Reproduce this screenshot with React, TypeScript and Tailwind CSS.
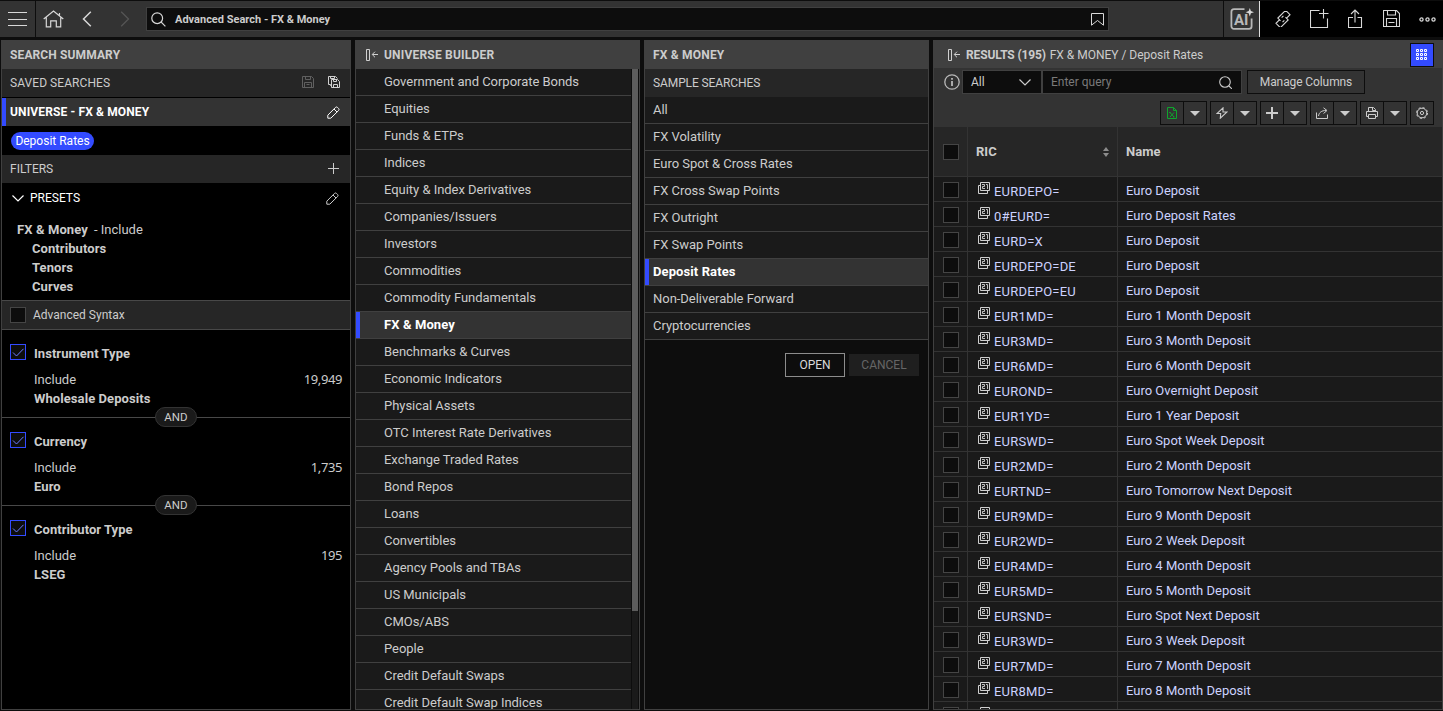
import type { ReactNode } from 'react';

const universes = [
  'Government and Corporate Bonds',
  'Equities',
  'Funds & ETPs',
  'Indices',
  'Equity & Index Derivatives',
  'Companies/Issuers',
  'Investors',
  'Commodities',
  'Commodity Fundamentals',
  'FX & Money',
  'Benchmarks & Curves',
  'Economic Indicators',
  'Physical Assets',
  'OTC Interest Rate Derivatives',
  'Exchange Traded Rates',
  'Bond Repos',
  'Loans',
  'Convertibles',
  'Agency Pools and TBAs',
  'US Municipals',
  'CMOs/ABS',
  'People',
  'Credit Default Swaps',
  'Credit Default Swap Indices',
];

const samples = [
  'All',
  'FX Volatility',
  'Euro Spot & Cross Rates',
  'FX Cross Swap Points',
  'FX Outright',
  'FX Swap Points',
  'Deposit Rates',
  'Non-Deliverable Forward',
  'Cryptocurrencies',
];

const filters = [
  { title: 'Instrument Type', value: 'Wholesale Deposits', count: '19,949' },
  { title: 'Currency', value: 'Euro', count: '1,735' },
  { title: 'Contributor Type', value: 'LSEG', count: '195' },
];

const results = [
  ['EURDEPO=', 'Euro Deposit'],
  ['0#EURD=', 'Euro Deposit Rates'],
  ['EURD=X', 'Euro Deposit'],
  ['EURDEPO=DE', 'Euro Deposit'],
  ['EURDEPO=EU', 'Euro Deposit'],
  ['EUR1MD=', 'Euro 1 Month Deposit'],
  ['EUR3MD=', 'Euro 3 Month Deposit'],
  ['EUR6MD=', 'Euro 6 Month Deposit'],
  ['EUROND=', 'Euro Overnight Deposit'],
  ['EUR1YD=', 'Euro 1 Year Deposit'],
  ['EURSWD=', 'Euro Spot Week Deposit'],
  ['EUR2MD=', 'Euro 2 Month Deposit'],
  ['EURTND=', 'Euro Tomorrow Next Deposit'],
  ['EUR9MD=', 'Euro 9 Month Deposit'],
  ['EUR2WD=', 'Euro 2 Week Deposit'],
  ['EUR4MD=', 'Euro 4 Month Deposit'],
  ['EUR5MD=', 'Euro 5 Month Deposit'],
  ['EURSND=', 'Euro Spot Next Deposit'],
  ['EUR3WD=', 'Euro 3 Week Deposit'],
  ['EUR7MD=', 'Euro 7 Month Deposit'],
  ['EUR8MD=', 'Euro 8 Month Deposit'],
  ['', ''],
];

type IconProps = { w: number; h: number; className?: string; sw?: number; children: ReactNode };

function Icon({ w, h, className = '', sw = 1, children }: IconProps) {
  return (
    <svg
      width={w}
      height={h}
      viewBox={`0 0 ${w} ${h}`}
      fill="none"
      stroke="currentColor"
      strokeWidth={sw}
      className={`block shrink-0 ${className}`}
    >
      {children}
    </svg>
  );
}

function Pencil({ className = '' }: { className?: string }) {
  return (
    <Icon w={13} h={13} className={className}>
      <path d="M.8 12.200v-3L8.400 1.500c.7-.7 1.500-.7 2.100-.1l1.100 1.100c.6.6.6 1.400-.1 2.100L3.800 12.200z" />
      <path d="M7 3l3 3" />
    </Icon>
  );
}

function Floppy({ className = '' }: { className?: string }) {
  return (
    <Icon w={12} h={12} className={className}>
      <path d="M.5.5h9l2 2v9H.5zM3.500.5v3h5v-3M2.500 11.500v-5h7v5M4.500 8.500h3" />
    </Icon>
  );
}

function Collapse() {
  return (
    <Icon w={13} h={12} className="text-[#d0d0d0]">
      <path d="M.5.5h3v11h-3zM12 5.500H6.500M9 2.700L6.200 5.500 9 8.300" />
    </Icon>
  );
}

function Checkbox({ checked }: { checked?: boolean }) {
  if (!checked) return <span className="block size-4 shrink-0 border border-[#454545] bg-[#0d0d0d]" />;
  return (
    <span className="flex size-4 shrink-0 items-center justify-center border border-[#334bff] bg-[#0d0d0d]">
      <Icon w={14} h={14} className="text-[#6b7bff]">
        <path d="M2 7.500l3.500 3.500L12.500 3.800" />
      </Icon>
    </span>
  );
}

function NavBar() {
  return (
    <header className="flex h-[37px] shrink-0 border-t border-[#0d0d0d] bg-[#333] text-[#d8d8d8]">
      <div className="flex w-9 items-center border-r border-[#0d0d0d] pl-2">
        <Icon w={19} h={16}>
          <path d="M0 1.500h19M0 8.500h19M0 14.500h19" />
        </Icon>
      </div>
      <div className="flex w-[110px] items-center pl-[7px]">
        <Icon w={21} h={18} sw={1.2}>
          <path d="M.7 9L10.500 1l9.800 8M3.300 7.500v9.400h4.400v-6h5.600v6h4.400V7.500M16.500 3v3" />
        </Icon>
        <Icon w={10} h={16} className="ml-[18px]" sw={1.5}>
          <path d="M8.800.8L1.500 8l7.300 7.200" />
        </Icon>
        <Icon w={10} h={16} className="ml-7 text-[#555]" sw={1.3}>
          <path d="M1.200.8L8.500 8l-7.300 7.200" />
        </Icon>
      </div>
      <div className="mt-1.5 flex h-6 w-[963px] items-center border border-[#404040] bg-[#0d0d0d] pr-1 pl-1">
        <Icon w={15} h={15} sw={1.2}>
          <circle cx="6.200" cy="6.200" r="5.400" />
          <path d="M10.200 10.200l4.200 4.200" />
        </Icon>
        <span className="ml-[9px] flex-1 pt-0.5 text-[11px] font-bold text-[#ccc]">Advanced Search - FX &amp; Money</span>
        <Icon w={13} h={13}>
          <path d="M.5.5h12v11.700L6.500 7.500l-6 4.700z" />
        </Icon>
      </div>
      <div className="ml-auto flex w-[37px] items-center justify-center border-r border-l border-r-[#ddd] border-l-[#0d0d0d]">
        <svg width="24" height="22" viewBox="0 0 24 22" fill="none" stroke="#b8b8b8" strokeWidth="1.8" className="block">
          <path d="M14.500 1.200H4A2.600 2.600 0 0 0 1.400 3.800v14.400A2.600 2.600 0 0 0 4 20.800h15a2.600 2.600 0 0 0 2.600-2.600V10.500" />
          <text x="4" y="16.500" fill="#b8b8b8" stroke="none" fontSize="15" fontWeight="700" fontFamily="Roboto, sans-serif">AI</text>
          <path d="M19.800 0l1.100 3.100L24 4.200l-3.100 1.100-1.100 3.100-1.100-3.100-3.100-1.100 3.100-1.100z" fill="#d8d8d8" stroke="none" />
        </svg>
      </div>
      <div className="flex w-[183px] items-center bg-black pl-[15px]">
        <Icon w={16} h={16} sw={1.1}>
          <path d="M5 7.500V3.700h11v6.200h-5.500M11 8.500v3.800H0V6.100h5.500M5.500 9.900h2.500M8 6.100h2.500" transform="rotate(-45 8 8)" />
        </Icon>
        <Icon w={19} h={19} className="-mt-px ml-[19px]" sw={1.1}>
          <path d="M9.500 1.500h-9v17h17V9.500M13.500 0v9.500M9 4.500h9.500" />
        </Icon>
        <Icon w={15} h={19} className="-mt-px ml-[19px]" sw={1.1}>
          <path d="M5 8.500H.5v10h13v-10H9.500M7 13.500V1M3 5l4-4 4 4" />
        </Icon>
        <Icon w={17} h={17} className="-mt-px ml-5" sw={1.1}>
          <path d="M.5.5h13l3 3v13H.5zM4.500.5v4.500h8V.5M3.500 16.500v-8h10v8M5.500 12.500h6" />
        </Icon>
        <Icon w={17} h={5} className="ml-[19px]" sw={1.3}>
          <circle cx="2.500" cy="2.500" r="1.600" />
          <circle cx="8.500" cy="2.500" r="1.600" />
          <circle cx="14.500" cy="2.500" r="1.600" />
        </Icon>
      </div>
    </header>
  );
}

function Summary() {
  return (
    <section className="flex w-[350px] flex-col border border-t-0 border-[#404040] bg-black text-[13px] text-[#ccc]">
      <h2 className="-mx-px flex h-[29px] items-center bg-[#404040] pt-px pl-[9px] text-xs font-bold tracking-[0.12px]">SEARCH SUMMARY</h2>
      <div className="flex h-[29px] items-center border-b border-black bg-[#262626] pr-2.5 pl-2 text-xs">
        <span className="flex-1 tracking-[0.06px]">SAVED SEARCHES</span>
        <Floppy className="-mt-0.5 text-[#606060]" />
        <Icon w={12} h={12} className="-mt-0.5 ml-[14px] text-[#d0d0d0]">
          <path d="M3.500 9.500h-1v-1h-2v-8h7l2 2M2.500.5v2h4v-2M3.500 3.500h6l2 2v6h-8zM5.500 3.500v2h3v-2M5.500 11.500v-3h4v3" />
        </Icon>
      </div>
      <div className="flex h-7 items-center border-l-4 border-[#334bff] bg-[#333] pr-2.5 pl-1 text-xs font-bold text-white">
        <span className="flex-1 tracking-[0.13px]">UNIVERSE - FX &amp; MONEY</span>
        <Pencil />
      </div>
      <div className="flex h-[29px] items-center pl-[9px]">
        <span className="flex h-[18px] w-[83px] items-center justify-center rounded-full bg-[#334bff] text-xs text-white">Deposit Rates</span>
      </div>
      <div className="flex h-7 items-center bg-[#262626] pr-[11px] pl-2 text-xs">
        <span className="flex-1">FILTERS</span>
        <Icon w={11} h={11} className="-mt-px">
          <path d="M5.500 0v11M0 5.500h11" />
        </Icon>
      </div>
      <div className="flex h-[30px] items-center pr-[11px] pl-2.5 text-xs text-white">
        <Icon w={12} h={7} sw={1.2}>
          <path d="M.5.5L6 6 11.500.5" />
        </Icon>
        <span className="ml-1.5 flex-1">PRESETS</span>
        <Pencil className="text-[#ccc]" />
      </div>
      <div className="h-[87px] pt-[7px] pl-[15px] leading-[19px]">
        <p>
          <b className="tracking-[0.1px]">FX &amp; Money</b>
          <span className="ml-1.5">- Include</span>
        </p>
        <div className="pl-[15px] font-bold tracking-[0.08px]">
          <p>Contributors</p>
          <p>Tenors</p>
          <p>Curves</p>
        </div>
      </div>
      <div className="flex h-[30px] items-center border-y border-[#484848] bg-[#262626] pl-2">
        <Checkbox />
        <span className="ml-[7px] text-xs">Advanced Syntax</span>
      </div>
      {filters.map((filter, i) => (
        <div key={filter.title} className={i === 2 ? 'relative h-[88px]' : 'relative h-[88px] border-b border-[#484848]'}>
          <div className="flex pt-3.5 pl-2">
            <Checkbox checked />
            <b className="ml-2 leading-[19px] tracking-[0.04px]">{filter.title}</b>
          </div>
          <div className="mt-[7px] flex justify-between pr-2 pl-8 leading-[19px]">
            <span>Include</span>
            <span className="font-['Noto_Sans'] text-[13px] tracking-[-0.4px]">{filter.count}</span>
          </div>
          <b className="block pl-8 leading-[19px] tracking-[0.08px]">{filter.value}</b>
          {i < 2 && (
            <span className="absolute top-[77px] left-[153px] z-10 flex h-5 w-[42px] items-center justify-center rounded-full border border-[#333] bg-[#1a1a1a] pt-px text-[11.5px]">
              AND
            </span>
          )}
        </div>
      ))}
    </section>
  );
}

function Row({ label, active, indent }: { label: string; active?: boolean; indent?: boolean }) {
  return (
    <li className={`flex h-[27px] shrink-0 items-stretch border-b border-[#404040] ${active ? 'bg-[#333] font-bold text-white' : 'bg-[#1a1a1a]'}`}>
      <span className={`w-1 ${active ? 'bg-[#334bff]' : ''}`} />
      <span className={`flex items-center ${indent ? 'pl-6' : 'pl-1'} ${active ? 'tracking-[0.1px]' : 'tracking-[-0.03px]'}`}>{label}</span>
    </li>
  );
}

function UniverseBuilder() {
  return (
    <section className="ml-1 flex w-[285px] flex-col overflow-hidden border border-t-0 border-[#404040] bg-[#0d0d0d] text-[13px] text-[#ccc]">
      <h2 className="-mx-px flex h-[29px] shrink-0 items-center gap-[5px] bg-[#404040] pt-px pl-[11px] text-xs font-bold tracking-[0.2px]">
        <Collapse />
        UNIVERSE BUILDER
      </h2>
      <div className="flex min-h-0 flex-1 overflow-hidden">
        <ul className="flex w-[275px] flex-col">
          {universes.map((name) => (
            <Row key={name} label={name} active={name === 'FX & Money'} indent />
          ))}
        </ul>
        <div className="ml-px w-1.5 bg-[#1a1a1a]">
          <div className="h-[542px] bg-[#5c5c5c]" />
        </div>
      </div>
    </section>
  );
}

function SampleSearches() {
  return (
    <section className="ml-1 w-[285px] border border-t-0 border-[#404040] bg-[#0d0d0d] text-[13px] text-[#ccc]">
      <h2 className="-mx-px flex h-[29px] items-center bg-[#404040] pt-px pl-[9px] text-xs font-bold tracking-[0.2px]">FX &amp; MONEY</h2>
      <h3 className="flex h-7 items-center bg-[#262626] pl-2 text-xs tracking-[-0.1px]">SAMPLE SEARCHES</h3>
      <ul>
        {samples.map((name) => (
          <Row key={name} label={name} active={name === 'Deposit Rates'} />
        ))}
      </ul>
      <div className="mt-[13px] flex items-center justify-end gap-1 pr-[9px] text-xs">
        <button className="h-6 w-[60px] border border-[#8c8c8c] text-[#d9d9d9]">OPEN</button>
        <button className="h-[22px] w-[70px] bg-[#1f1f1f] text-[#666]">CANCEL</button>
      </div>
    </section>
  );
}

function Split({ children }: { children: ReactNode }) {
  return (
    <div className="flex h-6 w-[47px] border border-[#0d0d0d]">
      <span className="flex w-[23px] items-center justify-center border-r border-[#0d0d0d]">{children}</span>
      <span className="flex flex-1 items-center justify-center">
        <svg width="10" height="5" viewBox="0 0 10 5" fill="currentColor" className="block">
          <path d="M0 0h10L5 5z" />
        </svg>
      </span>
    </div>
  );
}

function Toolbar() {
  return (
    <div className="flex h-[31px] items-start justify-end gap-[3px] pt-[5px] pr-2 text-[#ccc]">
      <Split>
        <Icon w={10} h={12} className="text-[#0fa52d]">
          <path d="M.5.5h6l3 3v8h-9zM6.500.5v3h3" />
          <path d="M3 5.500l4 4.500M7 5.500L3 10M2.200 5.500h1.500M6 10h1.500" />
        </Icon>
      </Split>
      <Split>
        <Icon w={12} h={12} sw={1.1}>
          <path d="M7 .8L1 6.500h3.700L4.300 11.200 11 5H7z" />
        </Icon>
      </Split>
      <Split>
        <Icon w={12} h={12} sw={2}>
          <path d="M6 0v12M0 6h12" />
        </Icon>
      </Split>
      <Split>
        <Icon w={13} h={12}>
          <path d="M.5 5.500v6h11v-4M2.500 9C3 5.500 5.500 3.500 10 3.500M7.500.8l3.500 2.700-3.500 3" />
        </Icon>
      </Split>
      <Split>
        <Icon w={12} h={12}>
          <path d="M2.500 5V.5h5l2 2V5M2.500 9.500h-2v-5h11v5h-2M2.500 7.500h7v4h-7zM6.500.5v3h3" />
        </Icon>
      </Split>
      <div className="flex size-6 items-center justify-center border border-[#0d0d0d]">
        <Icon w={12} h={12}>
          <circle cx="6" cy="6" r="4.800" />
          <circle cx="6" cy="6" r="5.500" strokeDasharray="2.160 2.160" />
          <circle cx="6" cy="6" r="1.600" />
        </Icon>
      </div>
    </div>
  );
}

function QuoteIcon() {
  return (
    <Icon w={12} h={12} className="text-[#d0d0d0]">
      <path d="M2.500.5h9v8h-9zM2 3.500H.5v8h9V9" />
      <path d="M4 2.500h2.500v2h-2v2H7M8 2.500h1.500V7" strokeWidth=".9" />
    </Icon>
  );
}

function Results() {
  return (
    <section className="ml-1 flex w-[510px] flex-col overflow-hidden border border-t-0 border-[#404040] bg-[#333] text-[13px] text-[#ccc]">
      <div className="-mx-px flex h-7 shrink-0 items-center bg-[#404040] pt-0.5 pr-[9px] pl-[15px] text-xs">
        <Collapse />
        <b className="ml-[5px] tracking-[-0.15px]">RESULTS (195)</b>
        <span className="ml-1 flex-1 tracking-[-0.02px]">FX &amp; MONEY / Deposit Rates</span>
        <span className="flex size-6 items-center justify-center border border-[#0d0d0d] bg-[#334bff] text-white">
          <Icon w={12} h={12}>
            <path d="M.5.5h2v2h-2zM4.500.5h2v2h-2zM8.500.5h2v2h-2zM.5 4.500h2v2h-2zM4.500 4.500h2v2h-2zM8.500 4.500h2v2h-2zM.5 8.500h2v2h-2zM4.500 8.500h2v2h-2zM8.500 8.500h2v2h-2z" />
          </Icon>
        </span>
      </div>
      <div className="flex h-7 items-center pl-2.5 text-xs">
        <Icon w={16} h={16} className="text-[#b8b8b8]" sw={1.3}>
          <circle cx="8" cy="8" r="7.200" />
          <path d="M8 7v5M8 4v1.700" strokeWidth="1.8" />
        </Icon>
        <div className="ml-0.5 flex h-6 w-[80px] items-center border border-[#404040] bg-[#0d0d0d] pr-2 pl-2">
          <span className="flex-1">All</span>
          <Icon w={12} h={7} sw={1.2} className="mr-0.5">
            <path d="M.5.5L6 6 11.500.5" />
          </Icon>
        </div>
        <div className="flex h-6 w-[200px] items-center border border-[#404040] bg-[#0d0d0d] pr-[9px] pl-2">
          <span className="flex-1 text-[#7a7a7a]">Enter query</span>
          <Icon w={13} h={13} sw={1.1}>
            <circle cx="6" cy="6" r="5.300" />
            <path d="M10 10l3 3" />
          </Icon>
        </div>
        <button className="ml-[5px] h-6 w-[118px] border border-[#0d0d0d] text-xs tracking-[-0.1px]">Manage Columns</button>
      </div>
      <Toolbar />
      <div className="flex h-[50px] shrink-0 border-b border-[#333] bg-[#262626] font-bold">
        <div className="flex w-[34px] items-center border-r border-[#333] pl-[9px]">
          <Checkbox />
        </div>
        <div className="flex w-[150px] items-center justify-between border-r border-[#333] pr-2 pl-2">
          RIC
          <svg width="6" height="10" viewBox="0 0 6 10" fill="#8c8c8c" className="block">
            <path d="M0 4l3-4 3 4zM0 6h6l-3 4z" />
          </svg>
        </div>
        <div className="flex items-center pl-2">Name</div>
      </div>
      <div className="min-h-0 flex-1 overflow-hidden bg-[#1a1a1a] text-[#ccd2ff]">
        {results.map(([ric, name]) => (
          <div key={ric} className="flex h-[25px] border-b border-[#333]">
            <div className="flex w-[34px] items-start border-r border-[#333] pt-[5px] pl-[9px]">
              <Checkbox />
            </div>
            <div className="flex w-[150px] items-start gap-1 border-r border-[#333] pt-[5px] pl-2.5">
              <QuoteIcon />
              <span className="leading-5 tracking-[0.2px]">{ric}</span>
            </div>
            <div className="flex items-center pt-[3px] pl-2">{name}</div>
          </div>
        ))}
      </div>
    </section>
  );
}

export default function App() {
  return (
    <div className="flex h-[711px] w-[1443px] flex-col overflow-hidden bg-[#0d0d0d] font-[Roboto,sans-serif]">
      <NavBar />
      <main className="mt-[3px] mb-px ml-px flex min-h-0 flex-1">
        <Summary />
        <UniverseBuilder />
        <SampleSearches />
        <Results />
      </main>
    </div>
  );
}
